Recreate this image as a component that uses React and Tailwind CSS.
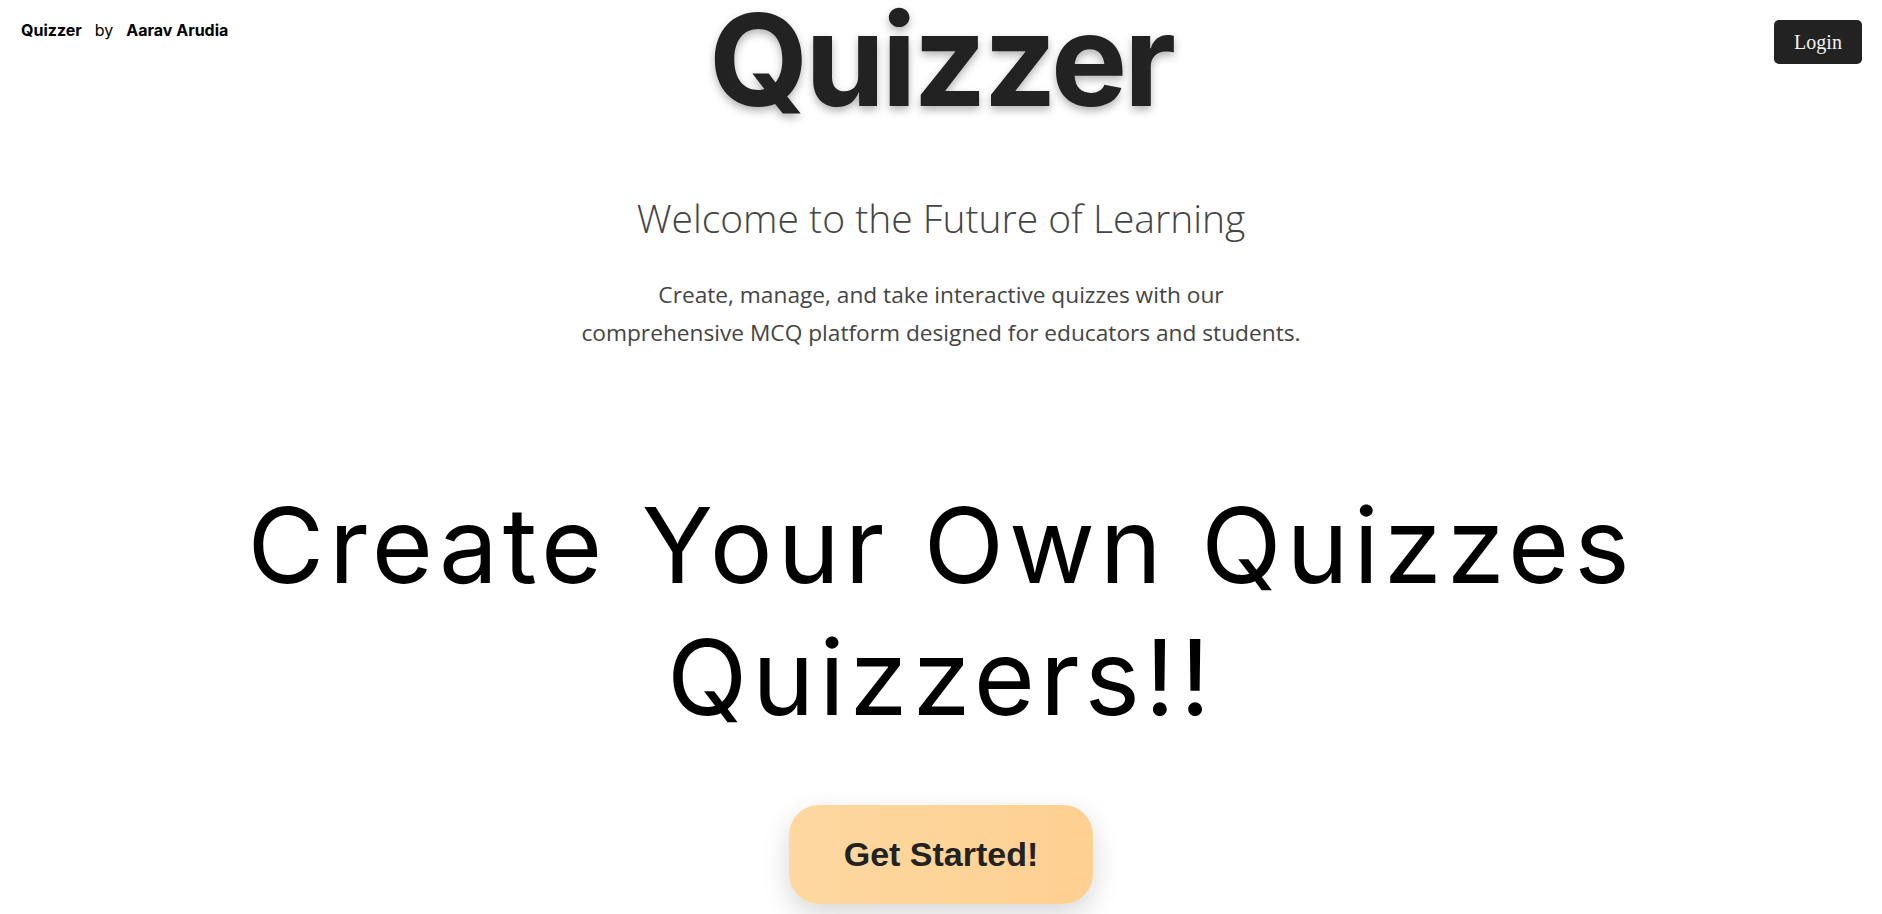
export default function App() {
  return (
    <div className="min-h-screen bg-white flex flex-col items-center overflow-hidden">
      <div className="w-full grid grid-cols-[1fr_auto_1fr] items-start">
        <div className="flex gap-[13px] pl-[21px] pt-[18px] text-base leading-6 text-black font-['Inter',sans-serif]">
          <span className="font-bold">Quizzer</span>
          <span className="font-normal">by</span>
          <span className="font-bold">Aarav Arudia</span>
        </div>
        <h1 className="text-[128px] leading-[0.94] font-bold tracking-tight text-[#222] font-['Inter',sans-serif] [text-shadow:0_4px_8px_rgba(0,0,0,0.3)]">
          Quizzer
        </h1>
        <div className="justify-self-end pr-5 pt-5">
          <button className="w-[88px] h-[44px] rounded-[5px] bg-[#222] text-[#f2f2f2] text-[20px] font-['Liberation_Serif',serif]">
            Login
          </button>
        </div>
      </div>

      <h2 className="mt-[76px] text-[39px] leading-[44px] font-light text-[#444] font-['Open_Sans',sans-serif]">
        Welcome to the Future of Learning
      </h2>
      <p className="mt-[36px] text-center text-[22.7px] leading-[38px] text-[#444] font-['Open_Sans',sans-serif]">
        Create, manage, and take interactive quizzes with our
        <br />
        comprehensive MCQ platform designed for educators and students.
      </p>

      <h3 className="mt-[127px] text-center text-[105px] leading-[132px] font-normal tracking-[0.047em] text-black font-['Inter',sans-serif]">
        Create Your Own Quizzes
        <br />
        Quizzers!!
      </h3>

      <button className="mt-[62px] w-[304px] h-[99px] rounded-[30px] bg-gradient-to-r from-[#fdd8a1] to-[#fed091] text-[34px] font-bold text-[#222] font-['Liberation_Sans',Arial,sans-serif] shadow-[0_10px_28px_rgba(0,0,0,0.16)]">
        Get Started!
      </button>
    </div>
  );
}
